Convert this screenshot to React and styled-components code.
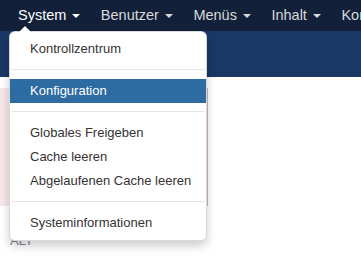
import React from "react";
import styled, { createGlobalStyle } from "styled-components";

const GlobalStyle = createGlobalStyle`
  body {
    margin: 0;
    background: #fff;
    font-family: "Liberation Sans", Arial, sans-serif;
  }
`;

const Page = styled.div`
  position: relative;
  width: 361px;
  height: 261px;
  overflow: hidden;
  background: #fff;
`;

const Navbar = styled.div`
  display: flex;
  height: 31px;
  padding-left: 8px;
  background: #13203a;
`;

const NavItem = styled.div`
  position: relative;
  display: flex;
  align-items: center;
  padding: 0 10.5px 0 10px;
  line-height: 31px;
  font-size: 14.5px;
  white-space: nowrap;
  color: ${(p) => (p.active ? "#fff" : "#d9d9d9")};
`;

const Caret = styled.span`
  display: inline-block;
  width: 0;
  height: 0;
  margin-left: 6px;
  margin-top: 1px;
  border-top: 4px solid currentColor;
  border-left: 4px solid transparent;
  border-right: 4px solid transparent;
`;

const Header = styled.div`
  height: 46px;
  background: #1a3766;
`;

const Content = styled.div`
  padding-top: 11px;
`;

const AlertBlock = styled.div`
  width: 207px;
  height: 118px;
  background: #f6e7e9;
  border-right: 1px solid #cdb2b6;
`;

const SectionLabel = styled.div`
  margin: 27px 0 0 10px;
  font-size: 13px;
  text-transform: uppercase;
  color: #7d8590;
`;

const Dropdown = styled.ul`
  position: absolute;
  top: 100%;
  left: 1px;
  z-index: 10;
  width: 198px;
  box-sizing: border-box;
  margin: 0;
  padding: 5px 0;
  list-style: none;
  background: #fff;
  border: 1px solid rgba(0, 0, 0, 0.15);
  border-radius: 6px;
  box-shadow: 0 5px 10px rgba(0, 0, 0, 0.2);
  line-height: 18px;

  &::before {
    content: "";
    position: absolute;
    top: -7px;
    left: 8px;
    border-left: 7px solid transparent;
    border-right: 7px solid transparent;
    border-bottom: 7px solid rgba(0, 0, 0, 0.2);
  }

  &::after {
    content: "";
    position: absolute;
    top: -6px;
    left: 9px;
    border-left: 6px solid transparent;
    border-right: 6px solid transparent;
    border-bottom: 6px solid #fff;
  }
`;

const MenuItem = styled.li`
  padding: 3px 20px;
  font-size: 13px;
  white-space: nowrap;
  color: ${(p) => (p.active ? "#fff" : "#333")};
  background: ${(p) => (p.active ? "#2d6ca2" : "transparent")};
`;

const Divider = styled.li`
  height: 1px;
  margin: 8px 1px;
  background: #e5e5e5;
  border-bottom: 1px solid #fff;
`;

const menu = [
  ["Kontrollzentrum"],
  "-",
  ["Konfiguration", true],
  "-",
  ["Globales Freigeben"],
  ["Cache leeren"],
  ["Abgelaufenen Cache leeren"],
  "-",
  ["Systeminformationen"],
];

const navItems = ["System", "Benutzer", "Menüs", "Inhalt", "Komponenten"];

export default function App() {
  return (
    <Page>
      <GlobalStyle />
      <Navbar>
        {navItems.map((label, i) => (
          <NavItem key={label} active={i === 0}>
            {label}
            <Caret />
            {i === 0 && (
              <Dropdown>
                {menu.map((item, j) =>
                  item === "-" ? (
                    <Divider key={j} />
                  ) : (
                    <MenuItem key={j} active={item[1]}>
                      {item[0]}
                    </MenuItem>
                  )
                )}
              </Dropdown>
            )}
          </NavItem>
        ))}
      </Navbar>
      <Header />
      <Content>
        <AlertBlock />
        <SectionLabel>Alt</SectionLabel>
      </Content>
    </Page>
  );
}
